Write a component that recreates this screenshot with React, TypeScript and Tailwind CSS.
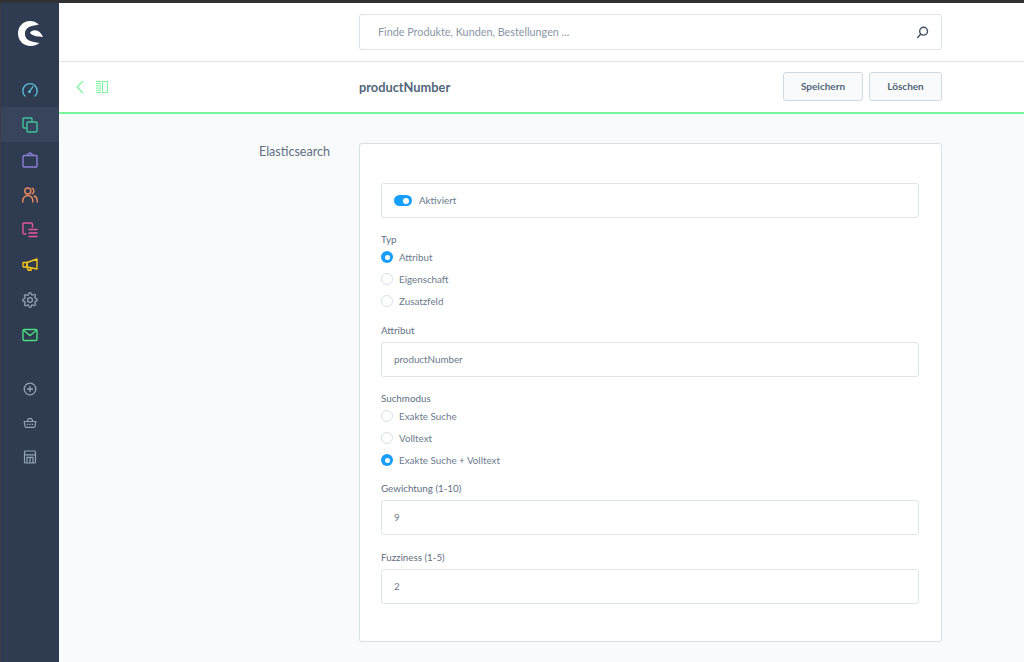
import React from 'react'

const fontStack = "font-['Lato','Noto_Sans',sans-serif]"

const Dashboard = () => (
    <svg width="16" height="16" viewBox="0 0 16 16" fill="none" stroke="#57bdd9" strokeWidth="1.4" strokeLinecap="round">
        <path d="M3 14A7.2 7.2 0 1 1 13 14" />
        <path d="M7.6 9.2L10.8 4.8" />
        <circle cx="7.4" cy="9.8" r=".7" />
    </svg>
)
const Products = () => (
    <svg width="16" height="16" viewBox="0 0 16 16" fill="none" stroke="#3fc59a" strokeWidth="1.4">
        <path d="M4.5 11H2a1 1 0 0 1-1-1V2a1 1 0 0 1 1-1h7a1 1 0 0 1 1 1v2.5" />
        <rect x="5" y="5" width="10" height="10" rx="1.2" />
    </svg>
)
const Orders = () => (
    <svg width="16" height="16" viewBox="0 0 16 16" fill="none" stroke="#8a7fd8" strokeWidth="1.4" strokeLinejoin="round">
        <path d="M2 3.5h12a1 1 0 0 1 1 1V14a1 1 0 0 1-1 1H2a1 1 0 0 1-1-1V4.5a1 1 0 0 1 1-1z" />
        <path d="M5.5 3.5V2.5L8 .8l2.5 1.7v1" />
    </svg>
)
const Customers = () => (
    <svg width="16" height="16" viewBox="0 0 16 16" fill="none" stroke="#f08a5d" strokeWidth="1.4" strokeLinecap="round">
        <circle cx="5.8" cy="4" r="3" />
        <path d="M.8 15v-1.5a5 5 0 0 1 10 0V15" />
        <path d="M10 1.2a3 3 0 0 1 0 5.6" />
        <path d="M12.2 9a5 5 0 0 1 3 4.5V15" />
    </svg>
)
const Content = () => (
    <svg width="16" height="16" viewBox="0 0 16 16" fill="none" stroke="#e6569f" strokeWidth="1.4" strokeLinecap="round">
        <path d="M4 12H2a1 1 0 0 1-1-1V2a1 1 0 0 1 1-1h7a1.5 1.5 0 0 1 1.5 1.5V5" />
        <path d="M7 7.5h8M7 11h8M7 14.5h8" strokeWidth="1.5" />
    </svg>
)
const Marketing = () => (
    <svg width="16" height="16" viewBox="0 0 16 16" fill="none" stroke="#f5c518" strokeWidth="1.4" strokeLinejoin="round">
        <path d="M15 2v10L5 10V5.5z" />
        <rect x="1" y="5.5" width="4" height="4.5" rx="0.6" />
        <path d="M5 10.2l1.2 3h3l-.8-2.4" />
    </svg>
)
const Settings = () => (
    <svg width="16" height="16" viewBox="0 0 24 24" fill="none" stroke="#94a3b8" strokeWidth="1.9" strokeLinejoin="round">
        <circle cx="12" cy="12" r="3.6" />
        <path d="M19.4 15a1.6 1.6 0 0 0 .3 1.8l.1.1a2 2 0 1 1-2.9 2.9l-.1-.1a1.6 1.6 0 0 0-2.7 1.1v.2a2 2 0 1 1-4 0v-.1a1.6 1.6 0 0 0-2.8-1.1l-.1.1a2 2 0 1 1-2.9-2.9l.1-.1a1.6 1.6 0 0 0-1.1-2.7H3a2 2 0 1 1 0-4h.1a1.6 1.6 0 0 0 1.1-2.8l-.1-.1a2 2 0 1 1 2.9-2.9l.1.1a1.6 1.6 0 0 0 1.8.3h.1a1.6 1.6 0 0 0 1-1.5V3a2 2 0 1 1 4 0v.1a1.6 1.6 0 0 0 2.7 1.1l.1-.1a2 2 0 1 1 2.9 2.9l-.1.1a1.6 1.6 0 0 0 1.1 2.7h.2a2 2 0 1 1 0 4h-.1a1.6 1.6 0 0 0-1.5 1z" />
    </svg>
)
const Mail = () => (
    <svg width="16" height="16" viewBox="0 0 16 16" fill="none" stroke="#4ade80" strokeWidth="1.4">
        <rect x="1" y="2.5" width="14" height="11" rx="1.2" />
        <path d="M1.4 3.2L8 8.5l6.6-5.3" />
    </svg>
)
const Plus = () => (
    <svg width="14" height="14" viewBox="0 0 14 14" fill="none" stroke="#94a3b8" strokeWidth="1.3" strokeLinecap="round">
        <circle cx="7" cy="7" r="5.8" />
        <path d="M7 4.4v5.2M4.4 7h5.2" />
    </svg>
)
const Basket = () => (
    <svg width="14" height="14" viewBox="0 0 14 14" fill="none" stroke="#94a3b8" strokeWidth="1.2" strokeLinejoin="round">
        <path d="M1.2 5.5h11.6l-.8 5a1 1 0 0 1-1 .8H3a1 1 0 0 1-1-.8z" />
        <path d="M4 5.5l1.4-2.800h3.200L10 5.500" />
        <path d="M3.800 8.400h1.400M6.300 8.400h1.400M8.800 8.400h1.400" />
    </svg>
)
const Store = () => (
    <svg width="14" height="14" viewBox="0 0 14 14" fill="none" stroke="#94a3b8" strokeWidth="1.2">
        <rect x="1.5" y="1" width="11" height="12" rx="1" />
        <path d="M1.5 4.800h11M4 13V7.400h6V13M7 7.400V13" />
    </svg>
)

const navTop = [
    { icon: <Dashboard />, active: false },
    { icon: <Products />, active: true },
    { icon: <Orders />, active: false },
    { icon: <Customers />, active: false },
    { icon: <Content />, active: false },
    { icon: <Marketing />, active: false },
    { icon: <Settings />, active: false },
    { icon: <Mail />, active: false }
]

const Sidebar = () => (
    <aside className="flex w-[59px] shrink-0 flex-col border-l border-[#3a3f47] bg-[#2f3b50]">
        <div className="flex h-[60px] items-center justify-center">
            <svg width="25" height="25" viewBox="0 0 25 25" fill="#fff">
                <path d="M21 3.500C18 1 15 0 12 0 5 0 0 5.500 0 12.500 0 19.500 5.500 25 12.500 25c3.500 0 6.500-1 9-3-4.500-1-9.500-1-12.500-4-2.500-2.500-3-7.500 0-10.500 3-3 8-3 12-4z" />
                <path d="M12 12c1-2.500 5-3.500 8-2 2 1 4 3.500 5 6-4-.5-10-.5-13-4z" />
            </svg>
        </div>
        <nav className="mt-[9px] flex flex-col">
            {navTop.map((item, i) => (
                <div
                    key={i}
                    className={`flex h-[35px] items-center justify-center ${item.active ? 'bg-[#38435c]' : ''}`}
                >
                    {item.icon}
                </div>
            ))}
        </nav>
        <div className="mt-[20px] flex flex-col">
            <div className="flex h-[34px] items-center justify-center"><Plus /></div>
            <div className="flex h-[34px] items-center justify-center"><Basket /></div>
            <div className="flex h-[34px] items-center justify-center"><Store /></div>
        </div>
    </aside>
)

const inputBox = 'flex items-center rounded-[3px] border border-[#dfe3ec] bg-white'

const Radio = ({ checked, label }: { checked?: boolean; label: string }) => (
    <div className="flex h-[22px] items-center gap-[6px]">
        {checked ? (
            <span className="flex size-[12px] items-center justify-center rounded-full bg-[#189eff]">
                <span className="size-[5px] rounded-full bg-white" />
            </span>
        ) : (
            <span className="size-[12px] rounded-full border border-[#d9dfe9] bg-white" />
        )}
        <span className="text-[9.8px] text-[#6b7a8e]">{label}</span>
    </div>
)

const TextField = ({ label, value, className = '' }: { label: string; value: string; className?: string }) => (
    <div className={className}>
        <div className="mb-[5px] h-[13px] text-[9.8px] leading-[13px] text-[#5f7084]">{label}</div>
        <div className={`${inputBox} h-[35px] px-3 text-[9.8px] text-[#6b7a8e]`}>{value}</div>
    </div>
)

export default function App() {
    return (
        <div className={`flex h-[662px] w-[1024px] flex-col overflow-hidden ${fontStack}`}>
            <div className="h-[3px] shrink-0 bg-[#303236]" />
            <div className="flex min-h-0 flex-1">
                <Sidebar />
                <main className="flex min-w-0 flex-1 flex-col bg-[#f9fafb]">
                    {/* Search */}
                    <div className="flex h-[59px] shrink-0 items-start border-b border-[#dfe3e8] bg-white pl-[300px] pr-[82px] pt-[11px]">
                        <div className={`${inputBox} h-[36px] w-full justify-between pl-[18px] pr-[12px]`}>
                            <span className="text-[10.8px] text-[#8a96a6]">Finde Produkte, Kunden, Bestellungen ...</span>
                            <svg width="13" height="13" viewBox="0 0 13 13" fill="none" stroke="#3d4c5c" strokeWidth="1.4" strokeLinecap="round">
                                <circle cx="7.6" cy="5.2" r="3.9" />
                                <path d="M4.8 8L1.6 11.6" />
                            </svg>
                        </div>
                    </div>

                    {/* Smart bar */}
                    <div className="flex h-[52px] shrink-0 items-center border-b-2 border-[#79f59c] bg-white pr-[82px]">
                        <div className="flex w-[300px] items-center gap-[12px] pl-[17px]">
                            <svg width="8" height="14" viewBox="0 0 8 14" fill="none" stroke="#79f59c" strokeWidth="1.2">
                                <path d="M7 1L1 7l6 6" />
                            </svg>
                            <svg width="12" height="12" viewBox="0 0 12 12" fill="none" stroke="#79f59c" strokeWidth="1">
                                <path d="M0 .5h5M0 2.7h5M0 4.9h5M0 7.1h5M0 9.3h5M0 11.5h5" />
                                <rect x="6.5" y=".5" width="5" height="11" />
                            </svg>
                        </div>
                        <h1 className="flex-1 pt-[2px] text-[12.8px] font-bold text-[#52667a]">productNumber</h1>
                        <div className="mb-[2px] flex gap-[6px]">
                            <button className="h-[29px] w-[80px] rounded-[3px] border border-[#d1d9e0] bg-[#f9fafb] text-[10px] font-bold text-[#52667a]">
                                Speichern
                            </button>
                            <button className="h-[29px] w-[73px] rounded-[3px] border border-[#d1d9e0] bg-[#f9fafb] text-[10px] font-bold text-[#52667a]">
                                Löschen
                            </button>
                        </div>
                    </div>

                    {/* Form */}
                    <div className="flex flex-1 pr-[82px] pt-[29px]">
                        <div className="w-[300px] pl-[200px] pt-[1px] text-[12.5px] leading-[16px] text-[#5f7084]">
                            Elasticsearch
                        </div>
                        <div className="h-[499px] flex-1 rounded-[3px] border border-[#d9dfe9] bg-white pl-[21px] pr-[22px] pt-[39px]">
                            <div className={`${inputBox} h-[35px] gap-[7px] pl-[12px] text-[9.8px] text-[#6b7a8e]`}>
                                <span className="flex h-[11px] w-[18px] items-center justify-end rounded-full bg-[#189eff] pr-[3px]">
                                    <span className="size-[6px] rounded-full bg-white" />
                                </span>
                                Aktiviert
                            </div>

                            <div className="mt-[15px] h-[13px] text-[9.8px] leading-[13px] text-[#5f7084]">Typ</div>
                            <div className="flex flex-col">
                                <Radio checked label="Attribut" />
                                <Radio label="Eigenschaft" />
                                <Radio label="Zusatzfeld" />
                            </div>

                            <TextField className="mt-[12px]" label="Attribut" value="productNumber" />

                            <div className="mt-[15px] h-[13px] text-[9.8px] leading-[13px] text-[#5f7084]">Suchmodus</div>
                            <div className="flex flex-col">
                                <Radio label="Exakte Suche" />
                                <Radio label="Volltext" />
                                <Radio checked label="Exakte Suche + Volltext" />
                            </div>

                            <TextField className="mt-[11px]" label="Gewichtung (1-10)" value="9" />
                            <TextField className="mt-[16px]" label="Fuzziness (1-5)" value="2" />
                        </div>
                    </div>
                </main>
            </div>
        </div>
    )
}
